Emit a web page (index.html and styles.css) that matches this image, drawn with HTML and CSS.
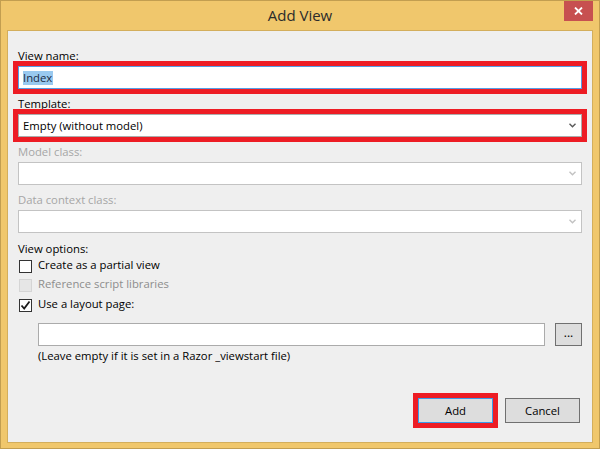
FILE: index.html
```html
<!DOCTYPE html>
<html lang="en">
<head>
<meta charset="utf-8">
<title>Add View</title>
<link rel="stylesheet" href="styles.css">
</head>
<body>
<div class="window">
  <div class="titlebar">
    <span class="spacer"></span>
    <div class="title">Add View</div>
    <button class="close" aria-label="Close">
      <svg width="9" height="8" viewBox="0 0 9 8"><path d="M1 0.5 L8 7.5 M8 0.5 L1 7.5" stroke="#fff" stroke-width="1.8" fill="none"/></svg>
    </button>
  </div>
  <div class="client">
    <div class="field">
      <div class="label">View name:</div>
      <div class="input focused annotated"><span class="sel">Index</span></div>
    </div>
    <div class="field">
      <div class="label">Template:</div>
      <div class="input select annotated"><span class="value">Empty (without model)</span>
        <svg class="chev" width="7" height="5" viewBox="0 0 7 5"><path d="M0.5 0.8 L3.5 3.8 L6.5 0.8" stroke="#5a5a5a" stroke-width="1.4" fill="none"/></svg>
      </div>
    </div>
    <div class="field">
      <div class="label disabled">Model class:</div>
      <div class="input select is-disabled"><span class="value"></span>
        <svg class="chev" width="7" height="5" viewBox="0 0 7 5"><path d="M0.5 0.8 L3.5 3.8 L6.5 0.8" stroke="#c2c2c2" stroke-width="1.4" fill="none"/></svg>
      </div>
    </div>
    <div class="field">
      <div class="label disabled">Data context class:</div>
      <div class="input select is-disabled"><span class="value"></span>
        <svg class="chev" width="7" height="5" viewBox="0 0 7 5"><path d="M0.5 0.8 L3.5 3.8 L6.5 0.8" stroke="#c2c2c2" stroke-width="1.4" fill="none"/></svg>
      </div>
    </div>

    <div class="label options-label">View options:</div>
    <div class="check row1"><span class="box"></span><span class="text">Create as a partial view</span></div>
    <div class="check row2 off"><span class="box"></span><span class="text">Reference script libraries</span></div>
    <div class="check row3"><span class="box">
      <svg width="11" height="11" viewBox="0 0 11 11"><path d="M1.5 5.5 L4.2 8.5 L9.5 1.5" stroke="#1a1a1a" stroke-width="1.8" fill="none"/></svg>
    </span><span class="text">Use a layout page:</span></div>

    <div class="layout-row">
      <div class="input path"></div>
      <button class="browse">...</button>
    </div>
    <div class="note">(Leave empty if it is set in a Razor _viewstart file)</div>

    <div class="buttons">
      <button class="btn default annotated">Add</button>
      <button class="btn">Cancel</button>
    </div>
  </div>
</div>
</body>
</html>
```
FILE: styles.css
```css
* { box-sizing: border-box; }
html, body { margin: 0; padding: 0; }
body {
  font-family: "Open Sans", "Noto Sans", sans-serif;
  font-size: 11.3px;
  color: #000;
  background: #fff;
}
.window {
  width: 600px;
  height: 449px;
  background: #f0c76c;
  border: 1px solid #c29e50;
  display: flex;
  flex-direction: column;
}
.titlebar {
  height: 29px;
  display: grid;
  grid-template-columns: 1fr auto 1fr;
  align-items: start;
}
.title {
  font-size: 15px;
  line-height: 29px;
  color: #2b2b2b;
}
.close {
  justify-self: end;
  width: 29px;
  height: 20px;
  margin-right: 6px;
  padding: 0;
  border: 0;
  background: #c75050;
  display: flex;
  align-items: center;
  justify-content: center;
}
.client {
  flex: 1;
  margin: 0 6px 5px;
  border: 1px solid #d3ae5c;
  background: #efefef;
  padding: 17px 10px 19px;
  display: flex;
  flex-direction: column;
}
.label {
  line-height: 15px;
  height: 15px;
  color: #000;
  white-space: nowrap;
}
.label.disabled { color: #a6a6a6; }
.field + .field { margin-top: 7px; }
.input {
  margin-top: 3px;
  height: 23px;
  background: #fff;
  border: 1px solid #acacac;
  display: flex;
  align-items: center;
  padding: 0 5px 0 4px;
}
.input.focused { border-color: #569de5; }
.input.is-disabled { border-color: #c3c3c3; }
.annotated { outline: 5px solid #ed1c24; }
.sel {
  background: #99c9ef;
  color: #1b2c44;
  line-height: 14px;
  padding: 0 1px 0 0;
}
.select .value { flex: 1; }
.chev { display: block; }
.options-label { margin-top: 8px; }
.check {
  display: flex;
  align-items: center;
  height: 13px;
  gap: 6px;
  margin-left: 1px;
  line-height: 15px;
}
.check .text { padding-bottom: 4px; white-space: nowrap; }
.check.row1 { margin-top: 4px; }
.check.row2 { margin-top: 6px; }
.check.row3 { margin-top: 7px; }
.box {
  width: 13px;
  height: 13px;
  border: 1px solid #333;
  background: #fff;
  display: flex;
  align-items: center;
  justify-content: center;
  flex: none;
}
.check.off { color: #8d8d8d; }
.check.off .box { background: #e6e6e6; border-color: #d5d5d5; }
.layout-row {
  margin: 11px 0 0 20px;
  display: flex;
  gap: 10px;
}
.layout-row .input { margin-top: 0; flex: 1; border-color: #ababab; }
.browse {
  width: 27px;
  height: 23px;
  padding: 0 0 3px;
  border: 1px solid #707070;
  background: #dddddd;
  font-family: inherit;
  font-size: 12px;
  line-height: 12px;
  color: #000;
}
.note {
  margin: 2px 0 0 20px;
  line-height: 15px;
  white-space: nowrap;
}
.buttons {
  margin-top: auto;
  display: flex;
  justify-content: flex-end;
  gap: 12px;
  padding-right: 2px;
}
.btn {
  width: 75px;
  height: 25px;
  padding: 0;
  border: 1px solid #707070;
  background: #dddddd;
  font-family: inherit;
  font-size: 11.3px;
  color: #000;
}
.btn.default { border-color: #3c9ae8; }
```
